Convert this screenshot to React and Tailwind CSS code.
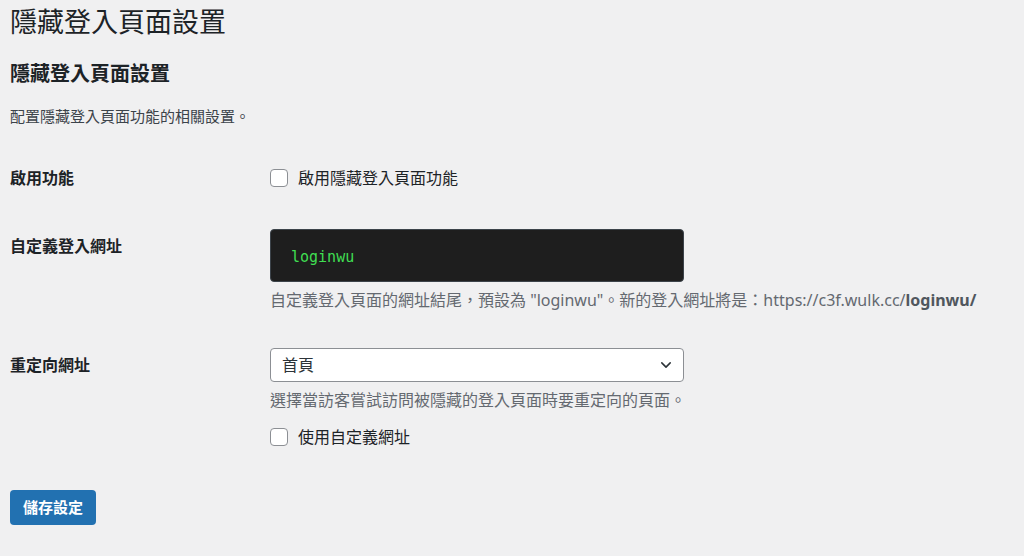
const font = { fontFamily: '"Noto Sans", "Noto Sans CJK TC", sans-serif' };

const Checkbox = ({ label }) => (
  <label className="flex h-[22px] items-center gap-[10px] text-[16px] leading-[22px] text-[#1d2327]">
    <span className="h-[18px] w-[18px] rounded-[4px] border border-[#8c8f94] bg-white" />
    {label}
  </label>
);

const Row = ({ label, labelPad = 'pt-0', children, className = '' }) => (
  <div className={`flex items-start ${className}`}>
    <div className={`w-[260px] shrink-0 text-[16px] font-bold leading-[22px] text-[#1d2327] ${labelPad}`}>
      {label}
    </div>
    <div className="flex-1">{children}</div>
  </div>
);

export default function App() {
  return (
    <div className="min-h-[556px] bg-[#f0f0f1] pl-[10px]" style={font}>
      <h1 className="pt-[4px] text-[27px] font-normal leading-[35px] text-[#1d2327]">隱藏登入頁面設置</h1>
      <h2 className="mt-[22px] text-[20px] font-bold leading-[26px] text-[#1d2327]">隱藏登入頁面設置</h2>
      <p className="mt-[18px] text-[15px] leading-[22px] text-[#3c434a]">配置隱藏登入頁面功能的相關設置。</p>

      <Row label="啟用功能" className="mt-[40px]">
        <Checkbox label="啟用隱藏登入頁面功能" />
      </Row>

      <Row label="自定義登入網址" labelPad="pt-[6px]" className="mt-[40px]">
        <div className="flex h-[53px] w-[414px] items-center rounded-[4px] border border-[#3c434a] bg-[#1e1e1e] pl-[20px] pt-[4px] text-[15px] text-[#40de52]" style={{ fontFamily: '"DejaVu Sans Mono", monospace' }}>
          loginwu
        </div>
        <p className="mt-[7px] text-[16px] leading-[22px] text-[#646970]">
          自定義登入頁面的網址結尾，預設為 "loginwu"。新的登入網址將是：https://c3f.wulk.cc/<strong className="font-bold text-[#50575e]">loginwu/</strong>
        </p>
      </Row>

      <Row label="重定向網址" labelPad="pt-[6px]" className="mt-[37px]">
        <div className="flex h-[34px] w-[414px] items-center justify-between rounded-[4px] border border-[#8c8f94] bg-white pl-[11px] pr-[10px] text-[16px] text-[#2c3338]">
          <span>首頁</span>
          <svg width="14" height="14" viewBox="0 0 20 20" fill="none" stroke="#2c3338" strokeWidth="2.2" strokeLinecap="round" strokeLinejoin="round">
            <path d="M4 7l6 6 6-6" />
          </svg>
        </div>
        <p className="mt-[7px] text-[16px] leading-[22px] text-[#646970]">選擇當訪客嘗試訪問被隱藏的登入頁面時要重定向的頁面。</p>
        <div className="mt-[15px]">
          <Checkbox label="使用自定義網址" />
        </div>
      </Row>

      <button className="mt-[42px] h-[35px] rounded-[4px] bg-[#2271b1] px-[13px] text-[15px] font-semibold text-white">
        儲存設定
      </button>
    </div>
  );
}
